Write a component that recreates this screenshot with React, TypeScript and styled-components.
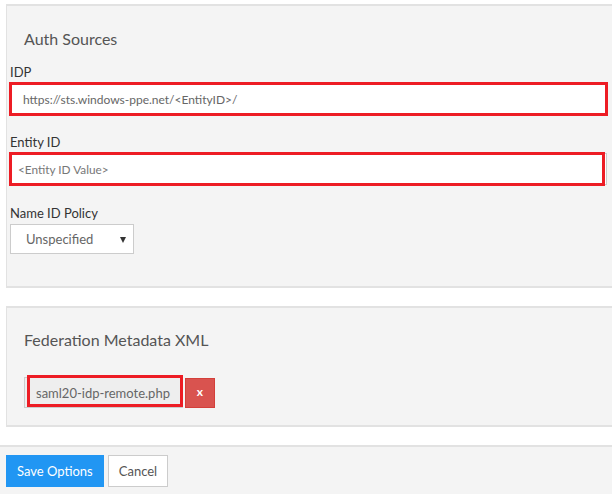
import React from "react";
import styled, { createGlobalStyle } from "styled-components";

const Global = createGlobalStyle`
  html, body { margin: 0; padding: 0; background: #fff; overflow: hidden; }
  body { font-family: Lato, "Open Sans", sans-serif; color: #333; }
  * { box-sizing: border-box; }
`;

const Page = styled.div`
  width: 612px;
  height: 494px;
  padding-top: 4px;
  display: flex;
  flex-direction: column;
  gap: 18px;
`;

const Panel = styled.section<{ $padLeft: number; $padTop: number; $padBottom: number }>`
  margin-left: 6px;
  margin-right: -12px;
  background: #f4f4f4;
  border-top: 2px solid #e2e2e2;
  border-left: 1px solid #e2e2e2;
  border-bottom: 2px solid #e2e2e2;
  padding: ${(p) => p.$padTop}px 17px ${(p) => p.$padBottom}px ${(p) => p.$padLeft}px;
  display: flex;
  flex-direction: column;
`;

const PanelTitle = styled.h3<{ $indent: number; $gap: number }>`
  margin: 0 0 ${(p) => p.$gap}px ${(p) => p.$indent}px;
  font-size: 16px;
  line-height: 20px;
  font-weight: 400;
  color: #555;
`;

const Field = styled.div<{ $space: number }>`
  display: flex;
  flex-direction: column;
  margin-top: ${(p) => p.$space}px;
`;

const Label = styled.label`
  font-size: 13px;
  line-height: 20px;
  color: #333;
  margin-bottom: 1px;
`;

const InputWrap = styled.div`
  position: relative;
  display: flex;
`;

const TextInput = styled.div<{ $small?: boolean }>`
  flex: 1;
  height: 32px;
  background: #fff;
  border: 1px solid #ccc;
  display: flex;
  align-items: center;
  padding-left: ${(p) => (p.$small ? 7 : 12)}px;
  font-size: ${(p) => (p.$small ? 11.8 : 12)}px;
  color: ${(p) => (p.$small ? "#777" : "#666")};
  white-space: nowrap;
`;

const Annotation = styled.div<{ $t: number; $r: number; $b: number; $l: number }>`
  position: absolute;
  top: ${(p) => p.$t}px;
  right: ${(p) => p.$r}px;
  bottom: ${(p) => p.$b}px;
  left: ${(p) => p.$l}px;
  border: 3px solid #ed1c24;
  pointer-events: none;
`;

const Select = styled.div`
  width: 124px;
  height: 30px;
  background: #fff;
  border: 1px solid #ccc;
  display: flex;
  align-items: center;
  justify-content: space-between;
  padding: 0 7px 0 15px;
  font-size: 13px;
  color: #666;
`;

const Caret = styled.span`
  width: 0;
  height: 0;
  border-left: 3px solid transparent;
  border-right: 3px solid transparent;
  border-top: 6px solid #333;
  margin-top: 1px;
`;

const FileRow = styled.div`
  display: flex;
  align-items: center;
  gap: 2px;
`;

const FileName = styled.div`
  position: relative;
  height: 31px;
  width: 159px;
  background: #eee;
  border: 1px solid #ccc;
  display: flex;
  align-items: center;
  padding-left: 11px;
  font-size: 13px;
  color: #666;
  white-space: nowrap;
`;

const RemoveButton = styled.button`
  width: 30px;
  height: 30px;
  border: 1px solid #d43f3a;
  background: #d9534f;
  color: #fff;
  font-family: Lato, sans-serif;
  font-weight: 700;
  font-size: 12px;
  padding: 0 0 2px;
  display: flex;
  align-items: center;
  justify-content: center;
`;

const Footer = styled.div`
  flex: 1;
  background: #f4f4f4;
  border-top: 2px solid #e2e2e2;
  padding: 8px 6px;
  display: flex;
  gap: 4px;
  align-items: flex-start;
`;

const Button = styled.button<{ $primary?: boolean }>`
  height: 32px;
  padding: 0 10px;
  font-family: Lato, sans-serif;
  font-size: 13px;
  border: 1px solid ${(p) => (p.$primary ? "#2196f3" : "#ccc")};
  background: ${(p) => (p.$primary ? "#2196f3" : "#fff")};
  color: ${(p) => (p.$primary ? "#fff" : "#555")};
`;

export default function App() {
  return (
    <Page>
      <Global />
      <Panel $padLeft={3} $padTop={23} $padBottom={32}>
        <PanelTitle $indent={14} $gap={13}>Auth Sources</PanelTitle>
        <Field $space={0}>
          <Label>IDP</Label>
          <InputWrap>
            <TextInput>https://sts.windows-ppe.net/&lt;EntityID&gt;/</TextInput>
            <Annotation $t={-1} $r={-1} $b={-1} $l={-1} />
          </InputWrap>
        </Field>
        <Field $space={17}>
          <Label>Entity ID</Label>
          <InputWrap>
            <TextInput $small>&lt;Entity ID Value&gt;</TextInput>
            <Annotation $t={-1} $r={2} $b={-1} $l={-1} />
          </InputWrap>
        </Field>
        <Field $space={18}>
          <Label>Name ID Policy</Label>
          <Select>
            <span>Unspecified</span>
            <Caret />
          </Select>
        </Field>
      </Panel>
      <Panel $padLeft={17} $padTop={22} $padBottom={17}>
        <PanelTitle $indent={0} $gap={27}>Federation Metadata XML</PanelTitle>
        <FileRow>
          <FileName>
            saml20-idp-remote.php
            <Annotation $t={-3} $r={-1} $b={0} $l={2} />
          </FileName>
          <RemoveButton>x</RemoveButton>
        </FileRow>
      </Panel>
      <Footer>
        <Button $primary>Save Options</Button>
        <Button>Cancel</Button>
      </Footer>
    </Page>
  );
}
